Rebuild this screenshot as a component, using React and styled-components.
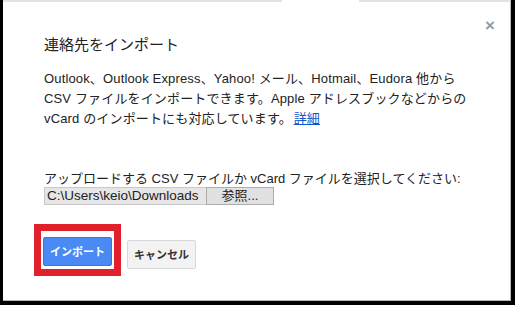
import React from 'react';
import styled, {createGlobalStyle} from 'styled-components';

const GlobalStyle = createGlobalStyle`
    html, body {
        margin: 0;
        padding: 0;
        background: #fff;
    }
    body {
        font-family: "Liberation Sans", Arial, "Noto Sans CJK JP", sans-serif;
        color: #222;
    }
`;

const Page = styled.div`
    width: 519px;
    height: 313px;
    background: #fff;
    overflow: hidden;
`;

const Frame = styled.div`
    width: 508px;
    height: 301px;
    border-left: 3px solid #000;
    border-right: 4px solid #000;
    border-bottom: 4px solid #000;
    position: relative;
`;

const Dialog = styled.div`
    height: 100%;
    box-sizing: border-box;
    border-right: 1px solid #b8b8b8;
    border-bottom: 1px solid #b8b8b8;
    padding: 35px 0 0 41px;
    display: flex;
    flex-direction: column;
`;

const CroppedTop = styled.div`
    position: absolute;
    top: 0;
    left: 0;
    right: 0;
    height: 2px;
    background: linear-gradient(90deg, #d8d8d8 0 55%, #fff 55% 70%, #d8d8d8 70%);
    opacity: .7;
`;

const Close = styled.div`
    position: absolute;
    top: 17px;
    right: 16px;
    font-size: 17px;
    font-weight: bold;
    color: #999;
    line-height: 1;
`;

const Title = styled.div`
    font-size: 15px;
    line-height: 20px;
    color: #222;
`;

const Text = styled.div`
    margin-top: 14px;
    font-size: 13px;
    line-height: 20px;
    width: 440px;
    letter-spacing: .15px;
`;

const Link = styled.a`
    color: #15c;
    text-decoration: underline;
    margin-left: -2px;
`;

const UploadBlock = styled.div`
    margin-top: 41px;
    font-size: 13px;
    line-height: 17px;
`;

const FileRow = styled.div`
    display: flex;
    height: 18px;
`;

const FilePath = styled.div`
    width: 157px;
    background: #e6e6e6;
    border: 1px solid #c8c8c8;
    border-right: none;
    padding: 0 2px;
    font-size: 13.5px;
    line-height: 16px;
    white-space: nowrap;
`;

const Browse = styled.div`
    width: 66px;
    background: #e1e1e1;
    border: 1px solid #adadad;
    text-align: center;
    font-size: 13px;
    line-height: 16px;
`;

const Buttons = styled.div`
    display: flex;
    align-items: center;
    gap: 6px;
    margin-top: 19px;
    margin-left: -10px;
`;

const Highlight = styled.div`
    border: 7px solid #e0202a;
    padding: 2px 2px 0 2px;
    height: 36px;
    display: flex;
    align-items: center;
`;

const Button = styled.div`
    box-sizing: border-box;
    width: 69px;
    height: 29px;
    border-radius: 2px;
    display: flex;
    align-items: center;
    justify-content: center;
    font-size: 11px;
    font-weight: bold;
    font-family: "Noto Sans CJK JP", sans-serif;
    background: ${p => p.$primary ? '#4a8af4' : '#f3f3f3'};
    color: ${p => p.$primary ? '#fff' : '#333'};
    border: 1px solid ${p => p.$primary ? '#3079ed' : '#d8d8d8'};
    margin-top: ${p => p.$primary ? '0' : '8px'};
`;

export default function App() {
    return <Page>
        <GlobalStyle/>
        <Frame>
            <CroppedTop/>
            <Close>×</Close>
            <Dialog>
                <Title>連絡先をインポート</Title>
                <Text>
                    <span>Outlook、Outlook Express、Yahoo! メール、Hotmail、Eudora 他から CSV ファイルをインポートできます。Apple アドレスブックなどからの vCard のインポートにも対応しています。 </span>
                    <Link>詳細</Link>
                </Text>
                <UploadBlock>
                    アップロードする CSV ファイルか vCard ファイルを選択してください:
                    <FileRow>
                        <FilePath>C:\Users\keio\Downloads</FilePath>
                        <Browse>参照...</Browse>
                    </FileRow>
                </UploadBlock>
                <Buttons>
                    <Highlight>
                        <Button $primary>インポート</Button>
                    </Highlight>
                    <Button>キャンセル</Button>
                </Buttons>
            </Dialog>
        </Frame>
    </Page>;
}
